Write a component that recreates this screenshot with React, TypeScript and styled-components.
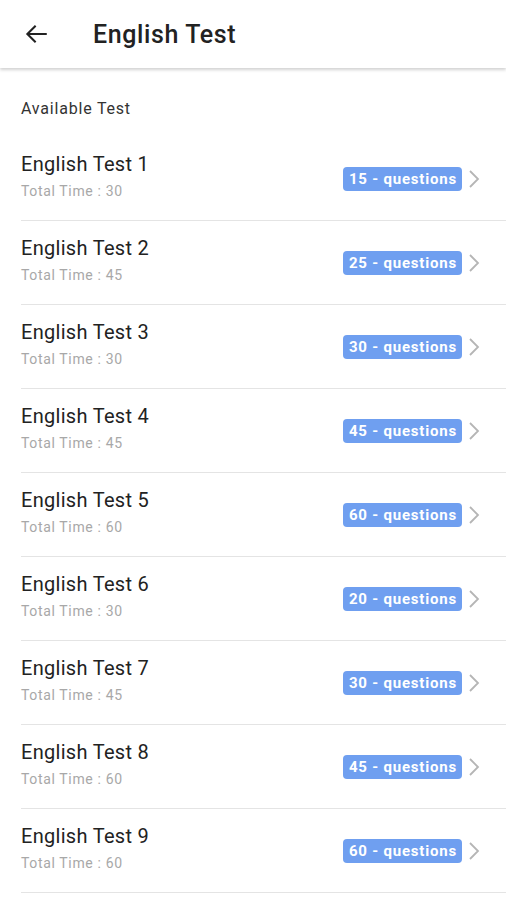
import styled, { createGlobalStyle } from 'styled-components';

const GlobalStyle = createGlobalStyle`
  body {
    margin: 0;
    background: #ffffff;
    font-family: Roboto, "Noto Sans", sans-serif;
  }
`;

const Page = styled.div`
  width: 506px;
  min-height: 900px;
  background: #ffffff;
`;

const Header = styled.header`
  height: 68px;
  display: flex;
  align-items: center;
  padding-left: 23px;
  box-shadow: 0 2px 3px rgba(0, 0, 0, 0.18);
  position: relative;
`;

const BackButton = styled.button`
  border: none;
  background: none;
  padding: 0;
  width: 26px;
  height: 26px;
  display: flex;
  align-items: center;
  justify-content: center;
  cursor: pointer;
`;

const HeaderTitle = styled.h1`
  margin: 0 0 0 44px;
  font-size: 25px;
  font-weight: 500;
  letter-spacing: 0.6px;
  color: #222222;
`;

const SectionLabel = styled.div`
  height: 69px;
  display: flex;
  align-items: center;
  padding: 12px 0 0 21px;
  box-sizing: border-box;
  font-size: 16px;
  letter-spacing: 0.8px;
  color: #333333;
`;

const List = styled.ul`
  list-style: none;
  margin: 0;
  padding: 0;
`;

const Row = styled.li`
  height: 84px;
  margin-left: 21px;
  padding-right: 26px;
  box-sizing: border-box;
  border-bottom: 1.5px solid #e4e4e4;
  display: flex;
  align-items: center;
`;

const Info = styled.div`
  flex: 1;
  display: flex;
  flex-direction: column;
  gap: 7px;
  padding-bottom: 6px;
`;

const RowTitle = styled.span`
  font-size: 20px;
  line-height: 24px;
  letter-spacing: 0.3px;
  color: #222222;
`;

const RowMeta = styled.span`
  font-size: 14px;
  line-height: 17px;
  letter-spacing: 0.65px;
  color: #a8a8a8;
`;

const Badge = styled.span`
  background: #6f9ff0;
  color: #ffffff;
  font-size: 15px;
  font-weight: 700;
  letter-spacing: 0.8px;
  border-radius: 4px;
  padding: 3px 5px 3px 6px;
  line-height: 18px;
`;

const Chevron = styled.svg`
  margin-left: 6px;
`;

const tests = [
  { n: 1, time: 30, q: 15 },
  { n: 2, time: 45, q: 25 },
  { n: 3, time: 30, q: 30 },
  { n: 4, time: 45, q: 45 },
  { n: 5, time: 60, q: 60 },
  { n: 6, time: 30, q: 20 },
  { n: 7, time: 45, q: 30 },
  { n: 8, time: 60, q: 45 },
  { n: 9, time: 60, q: 60 },
];

const App = () => (
  <Page>
    <GlobalStyle />
    <Header>
      <BackButton aria-label="Back">
        <svg width="26" height="26" viewBox="0 0 24 24" fill="none">
          <path d="M21 12H4.5M11 5l-7 7 7 7" stroke="#222" strokeWidth="1.9" strokeLinecap="square" />
        </svg>
      </BackButton>
      <HeaderTitle>English Test</HeaderTitle>
    </Header>
    <SectionLabel>Available Test</SectionLabel>
    <List>
      {tests.map((t) => (
        <Row key={t.n}>
          <Info>
            <RowTitle>English Test {t.n}</RowTitle>
            <RowMeta>Total Time : {t.time}</RowMeta>
          </Info>
          <Badge>{t.q} - questions</Badge>
          <Chevron width="12" height="20" viewBox="0 0 12 20" fill="none">
            <path d="M2 2l8 8-8 8" stroke="#b5b5b5" strokeWidth="1.8" />
          </Chevron>
        </Row>
      ))}
    </List>
  </Page>
);

export default App;
